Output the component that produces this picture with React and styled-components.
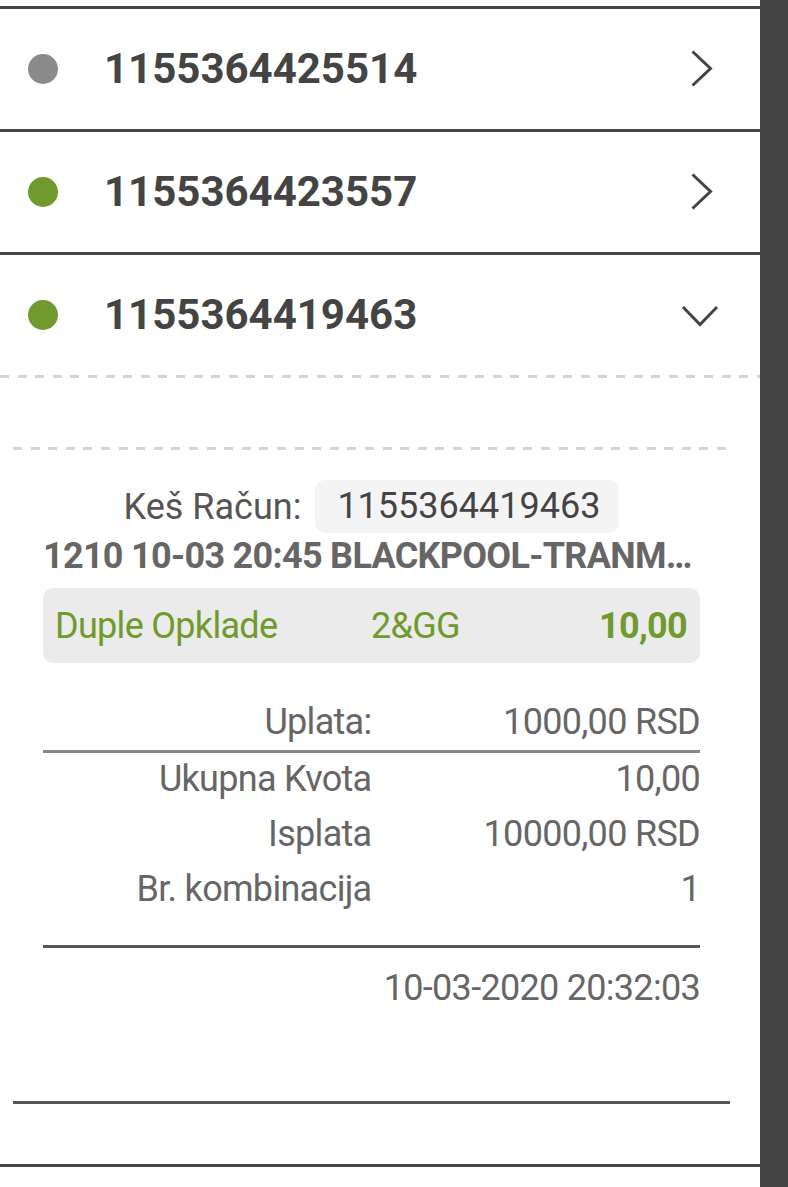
import React from "react";
import styled, { createGlobalStyle } from "styled-components";

const GlobalStyle = createGlobalStyle`
  html, body {
    margin: 0;
    padding: 0;
    overflow: hidden;
    background: #ffffff;
  }
  body {
    font-family: Roboto, "Noto Sans", "Liberation Sans", sans-serif;
    color: #444444;
  }
`;

const tickets = [
  { id: "1155364425514", status: "pending" },
  { id: "1155364423557", status: "won" },
  { id: "1155364419463", status: "won", open: true },
];

//summary rows under the uplata line
const totals = [
  { label: "Ukupna Kvota", value: "10,00" },
  { label: "Isplata", value: "10000,00 RSD" },
  { label: "Br. kombinacija", value: "1" },
];

const ChevronRight = () => (
  <svg width="40" height="40" viewBox="0 0 40 40" fill="none">
    <path d="M12.5 2.5 L30.5 19.5 L12.5 36.5" stroke="#444" strokeWidth="3" />
  </svg>
);

const ChevronDown = () => (
  <svg width="40" height="40" viewBox="0 0 40 40" fill="none">
    <path d="M3 12 L20 29.5 L37 12" stroke="#444" strokeWidth="3" />
  </svg>
);

const TicketDetails = ({ id }) => (
  <>
    <DashedLine />
    <Card>
      <DashedLine />
      <Body>
        <CashRow>
          <CashLabel>Keš Račun:</CashLabel>
          <CashBadge>{id}</CashBadge>
        </CashRow>
        <MatchTitle>1210 10-03 20:45 BLACKPOOL-TRANMERE</MatchTitle>
        <BetBox>
          <BetCell>Duple Opklade</BetCell>
          <BetCell>2&amp;GG</BetCell>
          <BetCell bold>10,00</BetCell>
        </BetBox>
        <SumGrid>
          <SumText>Uplata:</SumText>
          <SumText>1000,00 RSD</SumText>
        </SumGrid>
        <SumDivider />
        <SumGrid gap={15}>
          {totals.map((t) => (
            <React.Fragment key={t.label}>
              <SumText>{t.label}</SumText>
              <SumText>{t.value}</SumText>
            </React.Fragment>
          ))}
        </SumGrid>
        <DateLine>10-03-2020 20:32:03</DateLine>
      </Body>
    </Card>
  </>
);

const App = () => {
  return (
    <>
      <GlobalStyle />
      <Page>
        <List>
          {tickets.map((t) => (
            <Ticket key={t.id}>
              <Row>
                <Dot status={t.status} />
                <TicketNumber>{t.id}</TicketNumber>
                <Arrow>{t.open ? <ChevronDown /> : <ChevronRight />}</Arrow>
              </Row>
              {t.open && <TicketDetails id={t.id} />}
            </Ticket>
          ))}
        </List>
        <SideBar />
      </Page>
    </>
  );
};

const Page = styled.div`
  display: flex;
  height: 100vh;
  overflow: hidden;
`;

const List = styled.div`
  flex: 1;
  min-width: 0;
  padding-top: 6px;
`;

const SideBar = styled.div`
  width: 28px;
  flex-shrink: 0;
  background: #444444;
`;

const Ticket = styled.div`
  border-top: 3px solid #444444;
  &:last-child {
    border-bottom: 3px solid #444444;
  }
`;

const Row = styled.div`
  display: flex;
  align-items: center;
  height: 120px;
  padding: 0 40px 0 28px;
`;

const Dot = styled.span`
  width: 30px;
  height: 30px;
  border-radius: 50%;
  flex-shrink: 0;
  background: ${(props) => (props.status === "won" ? "#6f9a2d" : "#8a8a8a")};
`;

const TicketNumber = styled.div`
  margin-left: 46px;
  font-size: 42px;
  font-weight: 700;
  line-height: 48px;
  color: #444444;
`;

const Arrow = styled.div`
  margin-left: auto;
  width: 40px;
  height: 40px;
  display: flex;
`;

const DashedLine = styled.div`
  height: 3px;
  background: repeating-linear-gradient(
    to right,
    #d4d4d4 0 9px,
    transparent 9px 17.6px
  );
`;

const Card = styled.div`
  margin: 69px 30px 60px 13px;
  border-bottom: 3px solid #555555;
`;

const Body = styled.div`
  padding: 30px 30px 93px;
  display: flex;
  flex-direction: column;
`;

const CashRow = styled.div`
  display: flex;
  justify-content: center;
  align-items: center;
  gap: 14px;
`;

const CashLabel = styled.span`
  font-size: 36px;
  line-height: 40px;
  color: #555555;
`;

const CashBadge = styled.span`
  background: #f4f4f4;
  border-radius: 10px;
  padding: 6px 19px 7px 22px;
  font-size: 36px;
  line-height: 40px;
  color: #444444;
`;

const MatchTitle = styled.div`
  margin-top: 3px;
  font-size: 36px;
  font-weight: 700;
  line-height: 40px;
  letter-spacing: -0.7px;
  color: #666666;
  white-space: nowrap;
  overflow: hidden;
  text-overflow: ellipsis;
`;

const BetBox = styled.div`
  margin-top: 12px;
  display: grid;
  grid-template-columns: 50% 1fr auto;
  align-items: center;
  height: 75px;
  padding: 0 13px 0 12px;
  background: #ebebeb;
  border-radius: 10px;
`;

const BetCell = styled.span`
  font-size: 36px;
  line-height: 40px;
  letter-spacing: -0.7px;
  color: #6f9a2d;
  font-weight: ${(props) => (props.bold ? 700 : 400)};
`;

const SumGrid = styled.div`
  display: grid;
  grid-template-columns: 1fr 1fr;
  row-gap: ${(props) => props.gap || 0}px;
  margin-top: ${(props) => (props.gap ? 6 : 39)}px;
`;

const SumText = styled.span`
  text-align: right;
  font-size: 36px;
  line-height: 40px;
  letter-spacing: -0.7px;
  color: #666666;
`;

const SumDivider = styled.div`
  margin-top: 8px;
  height: 3px;
  background: #888888;
`;

const DateLine = styled.div`
  margin-top: 36px;
  padding-top: 20px;
  border-top: 3px solid #555555;
  text-align: right;
  font-size: 36px;
  line-height: 40px;
  letter-spacing: -0.7px;
  color: #666666;
`;

export default App;
